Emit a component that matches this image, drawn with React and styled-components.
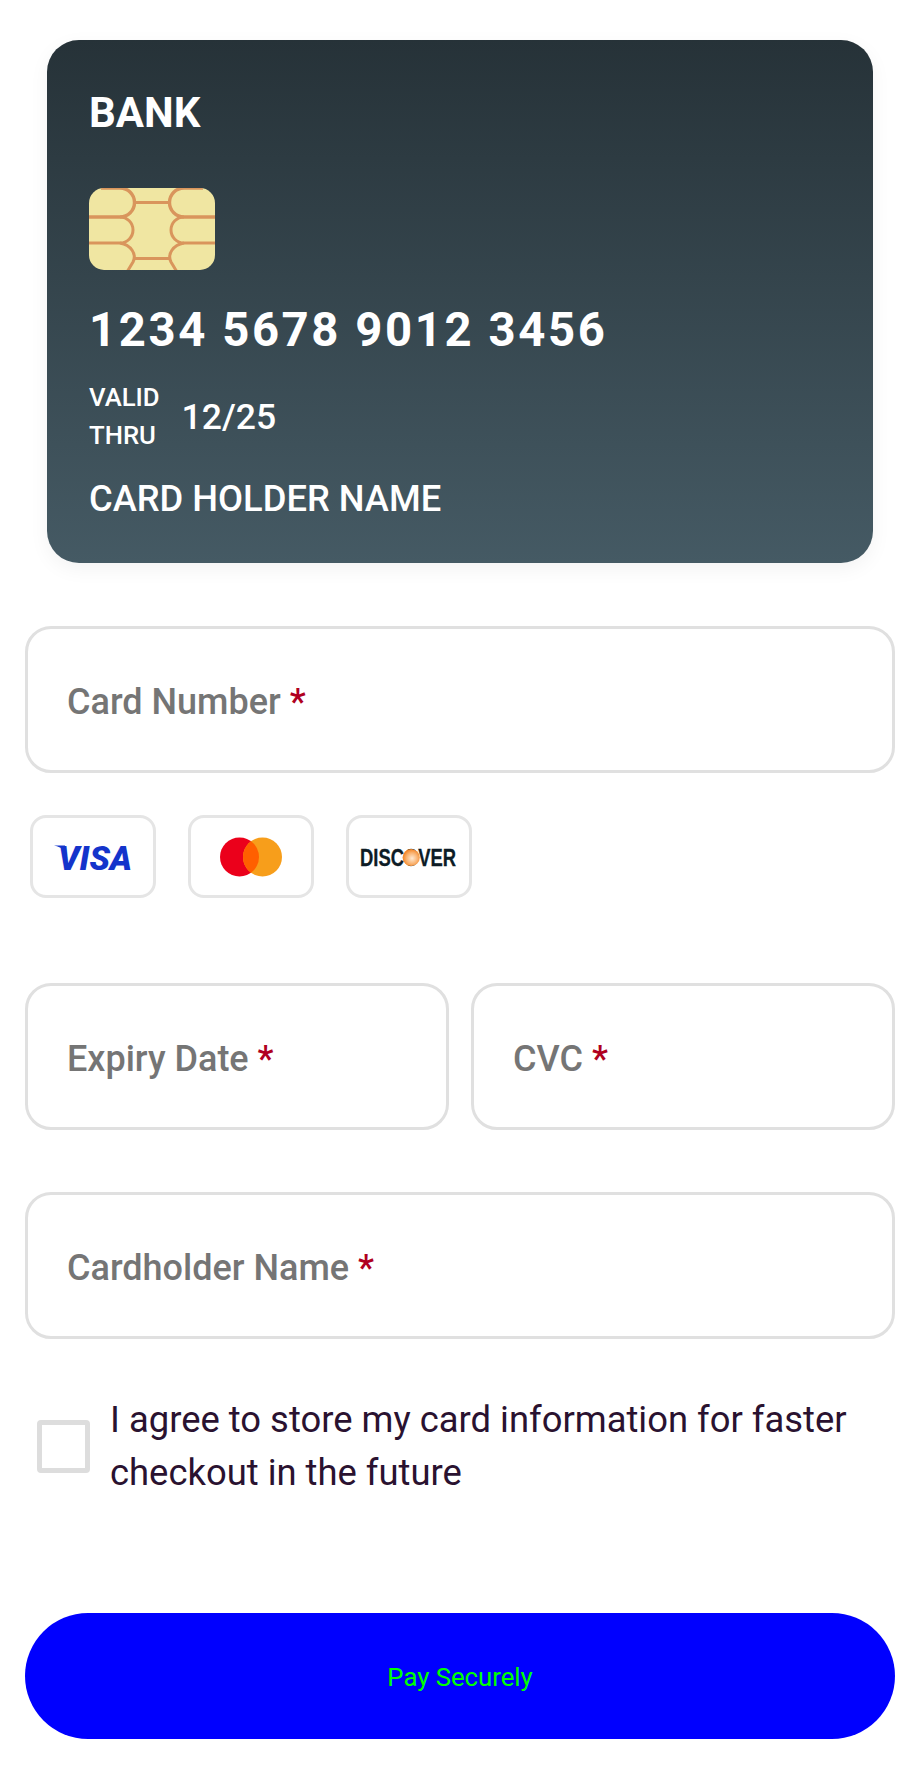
import styled, { createGlobalStyle } from 'styled-components'

const GlobalStyle = createGlobalStyle`
  html, body {
    margin: 0;
    padding: 0;
    background: #ffffff;
    font-family: Roboto, "Liberation Sans", sans-serif;
  }
  * {
    box-sizing: border-box;
  }
`

const Page = styled.div`
  width: 923px;
  height: 1767px;
  padding: 40px 28px 0 25px;
  overflow: hidden;
`

const CardPreview = styled.div`
  height: 523px;
  margin: 0 22px 63px;
  padding: 50px 42px 0;
  border-radius: 32px;
  background: linear-gradient(180deg, #263238 0%, #455a64 100%);
  box-shadow: 0 6px 20px rgba(0, 0, 0, 0.05);
  color: #ffffff;
`

const BankName = styled.div`
  font-size: 42px;
  font-weight: 700;
  line-height: 46px;
  margin-bottom: 52px;
`

const Chip = styled.svg`
  display: block;
  width: 126px;
  height: 82px;
  margin-bottom: 32px;
`

const CardNumber = styled.div`
  font-size: 47.25px;
  font-weight: 700;
  line-height: 56px;
  letter-spacing: 2.6px;
  margin-bottom: 21px;
`

const ValidRow = styled.div`
  display: flex;
  align-items: center;
  gap: 22px;
  margin-bottom: 23px;
`

const ValidLabel = styled.div`
  font-size: 25.7px;
  font-weight: 500;
  line-height: 37.5px;
`

const ValidDate = styled.div`
  font-size: 35.5px;
  font-weight: 500;
  line-height: 44px;
`

const HolderName = styled.div`
  font-size: 36.3px;
  font-weight: 500;
  line-height: 44px;
`

const Field = styled.div`
  flex: 1;
  height: 147px;
  display: flex;
  align-items: center;
  padding: 5px 39px 0;
  border: 3px solid #e0e0e0;
  border-radius: 26px;
  background: #ffffff;
`

const FieldLabel = styled.label`
  font-size: 36px;
  font-weight: 500;
  color: #757575;
`

const Required = styled.span`
  color: #b00020;
`

const BrandRow = styled.div`
  display: flex;
  gap: 32px;
  margin: 42px 0 85px 5px;
`

const Brand = styled.div`
  width: 126px;
  height: 83px;
  display: flex;
  align-items: center;
  justify-content: center;
  border: 3px solid #e5e5e5;
  border-radius: 16px;
  background: #ffffff;
`

const FieldRow = styled.div`
  display: flex;
  gap: 22px;
  margin-bottom: 62px;
`

const ConsentRow = styled.div`
  display: flex;
  align-items: center;
  gap: 20px;
  margin: 54px 0 114px 12px;
`

const Checkbox = styled.div`
  flex: none;
  width: 53px;
  height: 53px;
  border: 5px solid #dddddd;
  border-radius: 4px;
`

const ConsentText = styled.div`
  font-size: 36.4px;
  line-height: 53px;
  color: #2a1230;
`

const PayButton = styled.button`
  display: block;
  width: 100%;
  height: 126px;
  padding-top: 2px;
  border: none;
  border-radius: 63px;
  background: #0000ff;
  color: #00ff00;
  font-family: inherit;
  font-size: 25.7px;
`

const ChipArt = () => (
  <Chip viewBox="0 0 126 82">
    <defs>
      <clipPath id="chip-clip">
        <rect width="126" height="82" rx="15" />
      </clipPath>
    </defs>
    <g clipPath="url(#chip-clip)">
      <rect width="126" height="82" fill="#f0e6a2" />
      <g fill="none" stroke="#d9955c" strokeWidth="3">
        <path d="M12 0H31A14.5 14.5 0 0 1 31 29H0" strokeWidth="3.4" />
        <path d="M31 29A13 13 0 0 1 31 55H0" />
        <path d="M31 55C42 57 48 66 44 74L38 84" />
        <path d="M45 14.5H80M45 70.5H80" />
        <path d="M114 0H95A14.5 14.5 0 0 0 95 29H126" strokeWidth="3.4" />
        <path d="M95 29A13 13 0 0 0 95 55H126" />
        <path d="M95 55C84 57 78 66 82 74L88 84" />
      </g>
    </g>
  </Chip>
)

const VisaLogo = () => (
  <svg width="80" height="40" viewBox="0 0 80 40">
    <path d="M1 8.5H12L12 13C9 11 5 9.5 1 8.5Z" fill="#1434cb" />
    <text x="5" y="32.5" fontFamily="Roboto, sans-serif" fontSize="33" fontWeight="900" fontStyle="italic" fill="#1434cb" textLength="74" lengthAdjust="spacingAndGlyphs">VISA</text>
  </svg>
)

const MastercardLogo = () => (
  <svg width="62" height="40" viewBox="0 0 62 40">
    <circle cx="19.5" cy="20" r="19.5" fill="#eb001b" />
    <circle cx="42.5" cy="20" r="19.5" fill="#f79e1b" />
    <path d="M31 4.25A19.5 19.5 0 0 1 31 35.75A19.5 19.5 0 0 1 31 4.25Z" fill="#ff5f00" />
  </svg>
)

const DiscoverLogo = () => (
  <svg width="104" height="40" viewBox="0 0 104 40">
    <defs>
      <radialGradient id="discover-o" cx="0.55" cy="0.55" r="0.55">
        <stop offset="0%" stopColor="#ffe9d2" />
        <stop offset="60%" stopColor="#f9b16e" />
        <stop offset="100%" stopColor="#f48120" />
      </radialGradient>
    </defs>
    <text transform="translate(3 28.5) scale(0.8 1)" fontFamily="Liberation Sans, sans-serif" fontSize="23" fontWeight="700" fill="#0d1c26" stroke="#0d1c26" strokeWidth="0.3">DISCOVER</text>
    <circle cx="54.2" cy="20.5" r="8.6" fill="url(#discover-o)" />
  </svg>
)

const App = () => (
  <Page>
    <GlobalStyle />
    <CardPreview>
      <BankName>BANK</BankName>
      <ChipArt />
      <CardNumber>1234 5678 9012 3456</CardNumber>
      <ValidRow>
        <ValidLabel>VALID<br />THRU</ValidLabel>
        <ValidDate>12/25</ValidDate>
      </ValidRow>
      <HolderName>CARD HOLDER NAME</HolderName>
    </CardPreview>

    <Field>
      <FieldLabel>Card Number <Required>*</Required></FieldLabel>
    </Field>

    <BrandRow>
      <Brand><VisaLogo /></Brand>
      <Brand><MastercardLogo /></Brand>
      <Brand><DiscoverLogo /></Brand>
    </BrandRow>

    <FieldRow>
      <Field>
        <FieldLabel>Expiry Date <Required>*</Required></FieldLabel>
      </Field>
      <Field>
        <FieldLabel>CVC <Required>*</Required></FieldLabel>
      </Field>
    </FieldRow>

    <Field>
      <FieldLabel>Cardholder Name <Required>*</Required></FieldLabel>
    </Field>

    <ConsentRow>
      <Checkbox />
      <ConsentText>I agree to store my card information for faster checkout in the future</ConsentText>
    </ConsentRow>

    <PayButton>Pay Securely</PayButton>
  </Page>
)

export default App
